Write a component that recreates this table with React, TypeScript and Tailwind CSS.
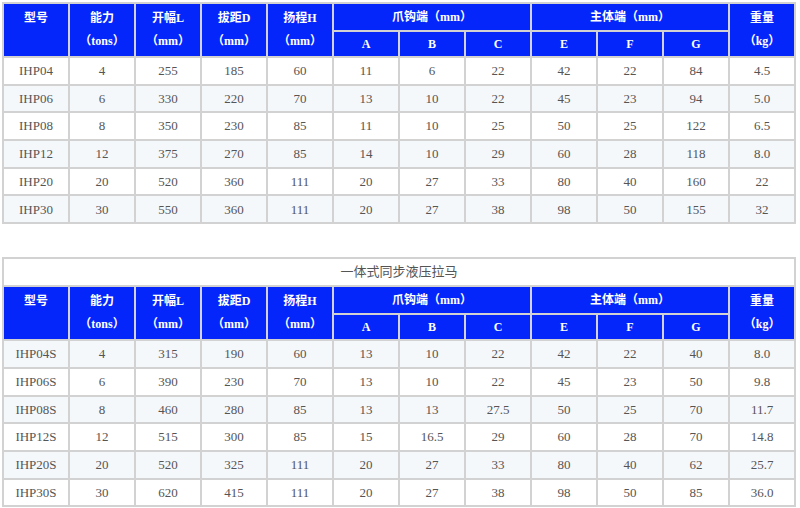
import React from "react";

const FONT = "font-['Liberation_Serif','Noto_Sans_CJK_SC',serif]";

const data1 = [
  ["IHP04", "4", "255", "185", "60", "11", "6", "22", "42", "22", "84", "4.5"],
  ["IHP06", "6", "330", "220", "70", "13", "10", "22", "45", "23", "94", "5.0"],
  ["IHP08", "8", "350", "230", "85", "11", "10", "25", "50", "25", "122", "6.5"],
  ["IHP12", "12", "375", "270", "85", "14", "10", "29", "60", "28", "118", "8.0"],
  ["IHP20", "20", "520", "360", "111", "20", "27", "33", "80", "40", "160", "22"],
  ["IHP30", "30", "550", "360", "111", "20", "27", "38", "98", "50", "155", "32"],
];

const data2 = [
  ["IHP04S", "4", "315", "190", "60", "13", "10", "22", "42", "22", "40", "8.0"],
  ["IHP06S", "6", "390", "230", "70", "13", "10", "22", "45", "23", "50", "9.8"],
  ["IHP08S", "8", "460", "280", "85", "13", "13", "27.5", "50", "25", "70", "11.7"],
  ["IHP12S", "12", "515", "300", "85", "15", "16.5", "29", "60", "28", "70", "14.8"],
  ["IHP20S", "20", "520", "325", "111", "20", "27", "33", "80", "40", "62", "25.7"],
  ["IHP30S", "30", "620", "415", "111", "20", "27", "38", "98", "50", "85", "36.0"],
];

const th =
  "border-2 border-[#d2d2d2] bg-[#0526fb] text-white font-bold text-[12px] text-center align-middle p-0";

function TwoLine({ a, b }: { a: string; b: string }) {
  return (
    <div className="leading-[23px]">
      <div>{a}</div>
      <div>{b || "\u00a0"}</div>
    </div>
  );
}

function Header() {
  return (
    <>
      <tr className="h-[28px]">
        <th rowSpan={2} className={th}>
          <TwoLine a="型号" b="" />
        </th>
        <th rowSpan={2} className={th}>
          <TwoLine a="能力" b="（tons）" />
        </th>
        <th rowSpan={2} className={th}>
          <TwoLine a="开幅L" b="（mm）" />
        </th>
        <th rowSpan={2} className={th}>
          <TwoLine a="拔距D" b="（mm）" />
        </th>
        <th rowSpan={2} className={th}>
          <TwoLine a="扬程H" b="（mm）" />
        </th>
        <th colSpan={3} className={th}>
          爪钩端（mm）
        </th>
        <th colSpan={3} className={th}>
          主体端（mm）
        </th>
        <th rowSpan={2} className={th}>
          <TwoLine a="重量" b="（kg）" />
        </th>
      </tr>
      <tr className="h-[26px]">
        {["A", "B", "C", "E", "F", "G"].map((l) => (
          <th key={l} className={th}>
            {l}
          </th>
        ))}
      </tr>
    </>
  );
}

function Rows({ data, stripeEven }: { data: string[][]; stripeEven: boolean }) {
  return (
    <>
      {data.map((row, i) => {
        const striped = stripeEven ? i % 2 === 0 : i % 2 === 1;
        return (
          <tr key={row[0]} className={`h-[27.7px] ${striped ? "bg-[#f5f8fb]" : "bg-white"}`}>
            {row.map((c, j) => (
              <td
                key={j}
                className="border-2 border-[#d2d2d2] text-center align-middle p-0 text-[13px] text-[#555]"
              >
                {c}
              </td>
            ))}
          </tr>
        );
      })}
    </>
  );
}

function Cols() {
  return (
    <colgroup>
      {Array.from({ length: 12 }).map((_, i) => (
        <col key={i} className="w-[66px]" />
      ))}
    </colgroup>
  );
}

export default function App() {
  return (
    <div className={`w-[800px] h-[508px] bg-white overflow-hidden pt-[2px] pl-[2px] ${FONT}`}>
      <table className="w-[794px] table-fixed border-collapse">
        <Cols />
        <tbody>
          <Header />
          <Rows data={data1} stripeEven={false} />
        </tbody>
      </table>
      <table className="w-[794px] table-fixed border-collapse mt-[33px]">
        <Cols />
        <tbody>
          <tr className="h-[28px]">
            <td
              colSpan={12}
              className="border-2 border-[#d2d2d2] text-center align-middle p-0 text-[13px] text-[#555] bg-white"
            >
              一体式同步液压拉马
            </td>
          </tr>
          <Header />
          <Rows data={data2} stripeEven={true} />
        </tbody>
      </table>
    </div>
  );
}
